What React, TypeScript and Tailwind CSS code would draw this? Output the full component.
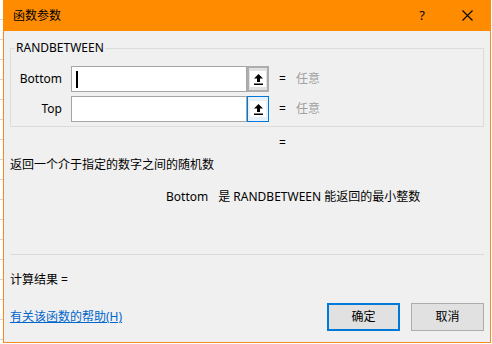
import React from 'react';

const font = "font-['Noto_Sans','Noto_Sans_CJK_SC',sans-serif]";

const UploadIcon = () => (
    <svg width="9" height="11" viewBox="0 0 9 11">
        <path d="M4.5 0 L9 4.5 L6 4.5 L6 8 L3 8 L3 4.5 L0 4.5 Z" fill="#000" />
        <rect x="0" y="9.5" width="9" height="1.5" fill="#000" />
    </svg>
);

const ArgRow = ({ label, active, focused }: { label: string; active?: boolean; focused?: boolean }) => (
    <div className="flex items-center h-[26px]">
        <div className="w-[51px] text-right text-[12px] text-black">{label}</div>
        <div className="ml-[9px] w-[176px] h-[26px] bg-white border border-[#a5a5a5] flex items-center">
            {focused && <div className="ml-[4px] w-[2px] h-[17px] bg-black" />}
        </div>
        <div
            className={
                active
                    ? 'w-[22px] h-[26px] border border-[#0078d7] bg-[#e5f1fb] flex items-center justify-center'
                    : 'w-[22px] h-[26px] border-2 border-[#adadad] bg-[#e1e1e1] flex items-center justify-center'
            }
        >
            <div className="w-[16px] h-[16px] bg-white flex items-center justify-center">
                <UploadIcon />
            </div>
        </div>
        <span className="ml-[10px] text-[12px] text-black">=</span>
        <span className="ml-[10px] text-[12px] text-[#a0a0a0]">任意</span>
    </div>
);

export default function App() {
    return (
        <div className={`w-[492px] h-[344px] flex bg-white ${font}`}>
            {/* spreadsheet behind the dialog */}
            <div className="w-[3px] h-full bg-[repeating-linear-gradient(to_bottom,#ffffff_0px,#ffffff_19px,#d4d4d4_19px,#d4d4d4_20px)]" />
            <div className="w-[488px] h-[343px] flex flex-col bg-[#f0f0f0] border border-t-0 border-[#f58b1f]">
                {/* title bar */}
                <div className="h-[31px] -mx-px bg-[#ff8c00] flex items-center pl-[10px]">
                    <span className="text-[12px] text-black">函数参数</span>
                    <span className="ml-auto text-[13px] text-black">?</span>
                    <svg className="ml-[37px] mr-[18px]" width="11" height="11" viewBox="0 0 11 11">
                        <path d="M0.5 0.5 L10.5 10.5 M10.5 0.5 L0.5 10.5" stroke="#000" strokeWidth="1.1" />
                    </svg>
                </div>

                <div className="flex-1 flex flex-col px-[6px]">
                    <fieldset className="mt-[10px] border border-[#dcdcdc] px-0 pt-[11px] pb-[4px]">
                        <legend className="ml-[4px] px-[1px] text-[12px] leading-[14px] text-black">RANDBETWEEN</legend>
                        <div className="flex flex-col gap-[4px]">
                            <ArgRow label="Bottom" focused />
                            <ArgRow label="Top" active />
                        </div>
                    </fieldset>

                    <div className="mt-[8px] pl-[269px] text-[12px] leading-[16px] text-black">=</div>
                    <div className="mt-[6px] text-[12px] leading-[16px] text-black">返回一个介于指定的数字之间的随机数</div>
                    <div className="mt-[16px] pl-[156px] text-[12px] leading-[16px] text-black">
                        <span className="mr-[10px]">Bottom</span>是 RANDBETWEEN 能返回的最小整数
                    </div>

                    <div className="mt-[49px] h-px bg-[#dadada]" />

                    <div className="mt-[17px] text-[12px] leading-[16px] text-black">计算结果 =</div>

                    <div className="mt-[15px] flex items-center">
                        <a className="text-[12px] text-[#0066cc] underline">有关该函数的帮助(H)</a>
                        <button className="ml-auto w-[73px] h-[28px] border-2 border-[#0078d7] bg-[#e1e1e1] text-[12px] text-black">
                            确定
                        </button>
                        <button className="ml-[11px] w-[73px] h-[28px] border border-[#adadad] bg-[#e1e1e1] text-[12px] text-black">
                            取消
                        </button>
                    </div>
                </div>
            </div>
        </div>
    );
}
